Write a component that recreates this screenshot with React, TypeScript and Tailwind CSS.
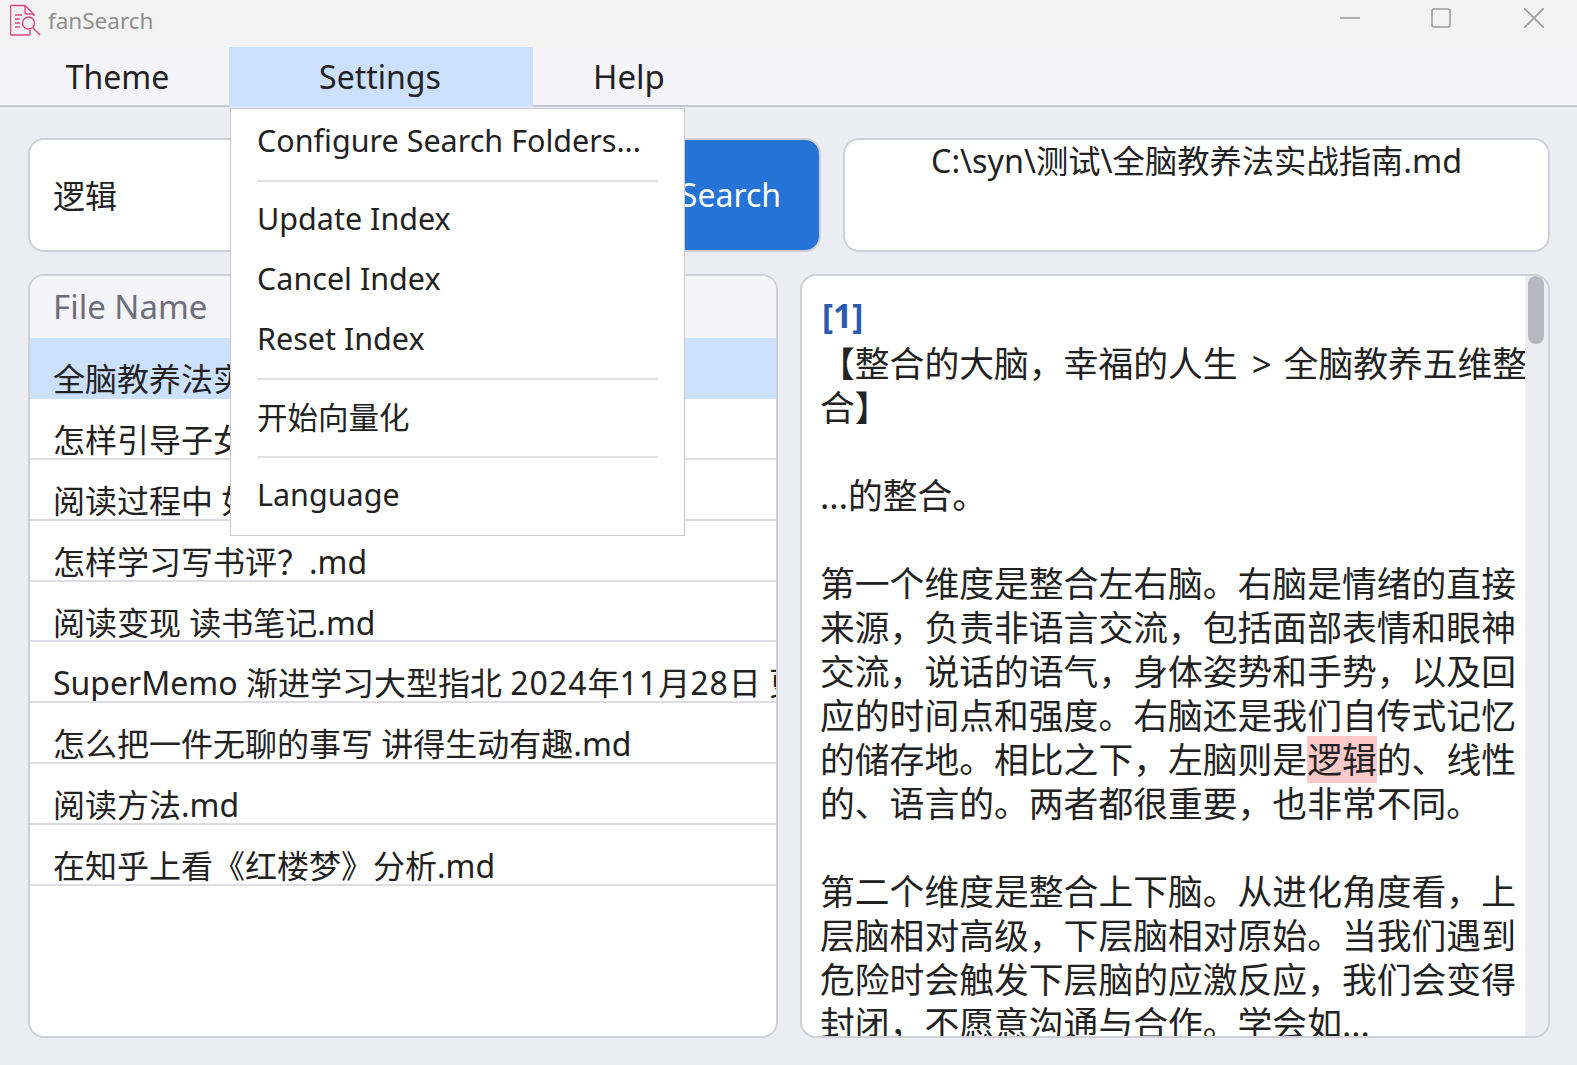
import type { ReactNode } from 'react';

const FONT = "font-['Noto_Sans','Noto_Sans_CJK_SC',sans-serif]";

const FILES: { id: number; name: ReactNode }[] = [
  { id: 1, name: '全脑教养法实战指南.md' },
  { id: 2, name: '怎样引导子女阅读.md' },
  { id: 3, name: '阅读过程中 如何做笔记.md' },
  { id: 4, name: '怎样学习写书评？.md' },
  { id: 5, name: '阅读变现 读书笔记.md' },
  {
    id: 6,
    name: (
      <>
        SuperMemo 渐进学习大型指北 <span className="tracking-[1px]">2024</span>年
        <span className="tracking-[1px]">11</span>月<span className="tracking-[1px]">28</span>日 更新版本.md
      </>
    ),
  },
  { id: 7, name: '怎么把一件无聊的事写 讲得生动有趣.md' },
  { id: 8, name: '阅读方法.md' },
  { id: 9, name: '在知乎上看《红楼梦》分析.md' },
];

function AppIcon() {
  return (
    <svg width="32" height="36" viewBox="0 0 32 36" fill="none" stroke="#e0457f" strokeWidth="1.4" className="shrink-0">
      <path d="M20 27V31a1 1 0 0 1-1 1H1.5a1 1 0 0 1-1-1V3.5a1 1 0 0 1 1-1H15l9 9v1.5" />
      <path d="M15 2.5V9a2 2 0 0 0 2 2h7" />
      <path d="M5 12h7M5 16h5M5 20h5M5 24h5" />
      <circle cx="18.5" cy="20" r="6" />
      <path d="M23 25l7 7" />
    </svg>
  );
}

function WindowButtons() {
  return (
    <div className="flex items-center pb-[11px]">
      <svg width="20" height="20" viewBox="0 0 20 20" stroke="#9c9c9c" strokeWidth="1.6" className="mr-[71px]">
        <path d="M0 10h20" />
      </svg>
      <svg width="20" height="20" viewBox="0 0 20 20" fill="none" stroke="#9c9c9c" strokeWidth="1.6" className="mr-[73px]">
        <rect x="1" y="1" width="18" height="18" rx="2" />
      </svg>
      <svg width="20" height="20" viewBox="0 0 20 20" stroke="#9c9c9c" strokeWidth="1.6" className="mr-[33px]">
        <path d="M0 0l20 20M20 0L0 20" />
      </svg>
    </div>
  );
}

function SettingsMenu() {
  return (
    <div className="absolute left-[230px] top-[108px] w-[455px] h-[428px] bg-white border border-[#c8c8d0] text-[30.5px] text-[#222] leading-[44px]">
      <div className="pl-[26px] pt-[9px] h-[71px]">Configure Search Folders...</div>
      <div className="mx-[26px] h-[2px] bg-[#e2e2e6]" />
      <div className="pl-[26px] pt-[14px]">Update Index</div>
      <div className="pl-[26px] pt-[16px]">Cancel Index</div>
      <div className="pl-[26px] pt-[16px] h-[78px]">Reset Index</div>
      <div className="mx-[26px] h-[2px] bg-[#e2e2e6]" />
      <div className="pl-[26px] pt-[15px] h-[76px]">开始向量化</div>
      <div className="mx-[26px] h-[2px] bg-[#e2e2e6]" />
      <div className="pl-[26px] pt-[14px]">Language</div>
    </div>
  );
}

function FileList() {
  return (
    <div className="w-[750px] h-[764px] bg-white border-2 border-[#cfcfd8] rounded-[16px] overflow-hidden">
      <div className="h-[62px] bg-[#f5f5f9] pl-[23px] text-[33px] leading-[62px] text-[#6e6e7a]">File Name</div>
      {FILES.map((file, i) => (
        <div
          key={file.id}
          className={`h-[60.9px] pl-[23px] overflow-hidden whitespace-nowrap text-[32px] leading-[44px] pt-[19px] text-[#222] ${
            i === 0 ? 'bg-[#cce0ff]' : 'border-b-2 border-[#dcdce2]'
          }`}
        >
          {file.name}
        </div>
      ))}
    </div>
  );
}

function Preview() {
  return (
    <div className="flex-1 h-[764px] bg-white border-2 border-[#cfcfd8] rounded-[16px] overflow-hidden flex">
      <div className="flex-1 pl-[18px] pt-[12px] text-[34.8px] leading-[44px] text-[#222] whitespace-nowrap overflow-hidden">
        <div className="font-bold text-[#2b5bb0] text-[33.5px] leading-[54px] pl-[2px]">[1]</div>
        <div>
          【整合的大脑，幸福的人生 <span className="ml-[5px] mr-[3px]">&gt;</span> 全脑教养五维整
        </div>
        <div>合】</div>
        <div className="h-[44px]" />
        <div>...的整合。</div>
        <div className="h-[44px]" />
        <div>第一个维度是整合左右脑。右脑是情绪的直接</div>
        <div>来源，负责非语言交流，包括面部表情和眼神</div>
        <div>交流，说话的语气，身体姿势和手势，以及回</div>
        <div>应的时间点和强度。右脑还是我们自传式记忆</div>
        <div>
          的储存地。相比之下，左脑则是<span className="bg-[#ffc9c9]">逻辑</span>的、线性
        </div>
        <div>的、语言的。两者都很重要，也非常不同。</div>
        <div className="h-[44px]" />
        <div>第二个维度是整合上下脑。从进化角度看，上</div>
        <div>层脑相对高级，下层脑相对原始。当我们遇到</div>
        <div>危险时会触发下层脑的应激反应，我们会变得</div>
        <div>封闭，不愿意沟通与合作。学会如...</div>
      </div>
      <div className="w-[23px] shrink-0 bg-[#ecedf2] pl-[3px]">
        <div className="w-[16px] h-[68px] rounded-[8px] bg-[#b8b8c2]" />
      </div>
    </div>
  );
}

export default function App() {
  return (
    <div className={`${FONT} relative w-[1577px] h-[1065px] overflow-hidden bg-[#ecedf2] flex flex-col`}>
      <div className="h-[47px] bg-[#f3f3f4] flex items-center justify-between pl-[10px]">
        <div className="flex items-center gap-[6px] pb-[6px]">
          <AppIcon />
          <span className="text-[22.5px] text-[#8f8f8f]">fanSearch</span>
        </div>
        <WindowButtons />
      </div>

      <div className="h-[60px] bg-[#f5f5f9] border-b-2 border-[#c8c8d0] flex text-[32px] text-[#222] leading-[60px]">
        <div className="w-[229px] pl-[6px] text-center">Theme</div>
        <div className="w-[304px] h-[60px] pr-[2px] text-center bg-[#cce0ff]">Settings</div>
        <div className="pl-[60px] text-[33px]">Help</div>
      </div>

      <div className="flex flex-col gap-[22px] pt-[31px] pl-[28px] pr-[27px]">
        <div className="flex gap-[22px] h-[114px]">
          <div className="w-[793px] flex">
            <div className="flex-1 bg-white border-2 border-[#cfcfd8] rounded-l-[16px] pl-[23px] text-[32px] leading-[111px] text-[#222]">
              逻辑
            </div>
            <div className="w-[181px] bg-[#2673d6] border-2 border-[#cfcfd8] rounded-[16px] text-white text-[32px] leading-[110px] text-center">
              Search
            </div>
          </div>
          <div className="flex-1 bg-white border-2 border-[#cfcfd8] rounded-[16px] text-center text-[32.3px] leading-[40px] text-[#222]">
            C:\syn\测试\全脑教养法实战指南.md
          </div>
        </div>

        <div className="flex gap-[22px]">
          <FileList />
          <Preview />
        </div>
      </div>

      <SettingsMenu />
    </div>
  );
}
